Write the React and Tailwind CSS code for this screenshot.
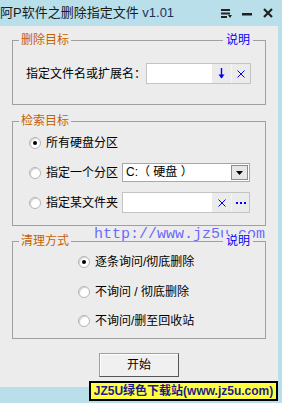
import React from 'react'

const font = { fontFamily: '"Liberation Sans", "Noto Sans CJK SC", sans-serif' }

function Radio({ checked }) {
  return (
    <span className="relative w-[12px] h-[12px] shrink-0 rounded-full border border-[#b4b4b4] bg-white flex items-center justify-center shadow-[inset_1px_1px_1px_#d0d0d0]">
      {checked && <span className="w-[4px] h-[4px] rounded-full bg-black" />}
    </span>
  )
}

function Group({ title, link, className = '', children }) {
  return (
    <div className={`relative ml-[12px] w-[254px] border border-[#a0a0a0] ${className}`}>
      <span className="absolute -top-[8px] left-[6px] px-[2px] bg-[#ececec] text-[12px] leading-[14px] text-[#c86000]">
        {title}
      </span>
      {link && (
        <span className="absolute -top-[8px] left-[210px] px-[3px] bg-[#ececec] text-[12px] leading-[14px] text-[#0000ff] z-20">
          说明
        </span>
      )}
      {children}
    </div>
  )
}

export default function App() {
  return (
    <div className="relative w-[282px] h-[403px] bg-[#b9dfea] flex flex-col overflow-hidden text-[12px] text-black" style={font}>
      {/* title bar */}
      <div className="h-[26px] flex items-center justify-between shrink-0">
        <span className="text-[13px] leading-[16px] text-[#1a1a1a]">
          阿P软件之删除指定文件 <span className="text-[#1e2f5c]">v1.01</span>
        </span>
        <div className="flex items-center h-full">
          <svg width="11" height="9" viewBox="0 0 11 9" className="mr-[10px]">
            <rect x="0" y="0" width="9" height="2" fill="#222" />
            <rect x="0" y="3.5" width="9" height="2" fill="#222" />
            <rect x="0" y="7" width="6" height="2" fill="#222" />
            <path d="M7 6 L11 6 L9 9 Z" fill="#222" />
          </svg>
          <svg width="10" height="3" viewBox="0 0 10 3" className="mr-[11px] mt-[3px]">
            <rect x="0" y="0" width="10" height="2.5" fill="#222" />
          </svg>
          <svg width="10" height="10" viewBox="0 0 10 10" className="mr-[9px]">
            <path d="M1 1 L9 9 M9 1 L1 9" stroke="#222" strokeWidth="2.2" />
          </svg>
        </div>
      </div>

      {/* body */}
      <div className="relative w-[278px] h-[361px] bg-[#ececec] flex flex-col">
        <Group title="删除目标" link className="mt-[14px] pt-[22px] pb-[20px]">
          <div className="flex items-center h-[21px] pl-[13px]">
            <span className="w-[120px]">指定文件名或扩展名：</span>
            <div className="flex w-[105px] h-[21px] border border-[#c4c4c4]">
              <div className="w-[65px] bg-white" />
              <div className="w-[19px] flex items-center justify-center bg-[#ebebeb]">
                <svg width="7" height="11" viewBox="0 0 7 11">
                  <path d="M3.5 0 V10" stroke="#0000ff" strokeWidth="1.4" />
                  <path d="M0.5 6.5 L3.5 10.5 L6.5 6.5" fill="#0000ff" />
                </svg>
              </div>
              <div className="flex-1 flex items-center justify-center bg-[#ebebeb] border-l border-[#f4f4f4]">
                <svg width="8" height="8" viewBox="0 0 8 8">
                  <path d="M0.5 0.5 L7.5 7.5 M7.5 0.5 L0.5 7.5" stroke="#0000ff" strokeWidth="1" />
                </svg>
              </div>
            </div>
          </div>
        </Group>

        <Group title="检索目标" className="mt-[16px] pt-[10px] pb-[12px] flex flex-col gap-[9px]">
          <div className="flex items-center h-[21px] pl-[16px]">
            <Radio checked />
            <span className="ml-[5px]">所有硬盘分区</span>
          </div>
          <div className="flex items-center h-[21px] pl-[16px]">
            <Radio />
            <span className="ml-[5px] w-[76px]">指定一个分区</span>
            <div className="flex items-center w-[128px] h-[19px] border border-[#a8a8a8] bg-white">
              <span className="flex-1 pl-[3px] leading-[17px]">C:（ 硬盘 ）</span>
              <div className="w-[17px] h-[15px] mr-[1px] bg-[#e6e6e6] border border-[#8c8c8c] flex items-center justify-center">
                <svg width="7" height="4" viewBox="0 0 7 4">
                  <path d="M0 0 H7 L3.5 4 Z" fill="#000" />
                </svg>
              </div>
            </div>
          </div>
          <div className="flex items-center h-[21px] pl-[16px]">
            <Radio />
            <span className="ml-[5px] w-[76px]">指定某文件夹</span>
            <div className="flex w-[128px] h-[21px] border border-[#c4c4c4]">
              <div className="w-[89px] bg-white" />
              <div className="w-[19px] flex items-center justify-center bg-[#ebebeb]">
                <svg width="8" height="8" viewBox="0 0 8 8">
                  <path d="M0.5 0.5 L7.5 7.5 M7.5 0.5 L0.5 7.5" stroke="#0000ff" strokeWidth="1" />
                </svg>
              </div>
              <div className="flex-1 flex items-center justify-center bg-[#ebebeb] border-l border-[#f4f4f4]">
                <svg width="10" height="2" viewBox="0 0 10 2">
                  <rect x="0" y="0" width="2" height="2" fill="#0000ff" />
                  <rect x="4" y="0" width="2" height="2" fill="#0000ff" />
                  <rect x="8" y="0" width="2" height="2" fill="#0000ff" />
                </svg>
              </div>
            </div>
          </div>
        </Group>

        <Group title="清理方式" link className="mt-[15px] pt-[10px] pb-[7px] flex flex-col">
          <div className="flex items-center h-[20px] pl-[65px]">
            <Radio checked />
            <span className="ml-[5px]">逐条询问/彻底删除</span>
          </div>
          <div className="flex items-center h-[20px] pl-[65px] mt-[10px]">
            <Radio />
            <span className="ml-[5px]">不询问 / 彻底删除</span>
          </div>
          <div className="flex items-center h-[20px] pl-[65px] mt-[9px]">
            <Radio />
            <span className="ml-[5px]">不询问/删至回收站</span>
          </div>
        </Group>

        <button className="mt-[14px] ml-[99px] w-[80px] h-[24px] bg-[#f0f0f0] border border-[#a0a0a0] border-r-[#555] border-b-[#555] text-[12px] shadow-[inset_1px_1px_0_#fff]">
          开始
        </button>

        {/* watermark */}
        <span
          className="absolute left-[94px] top-[200px] text-[15px] leading-[17px] text-[#4646ff]/80 z-10 pointer-events-none"
          style={{ fontFamily: '"Liberation Mono", monospace' }}
        >
          http://www.jz5u.com
        </span>
      </div>

      {/* banner */}
      <div className="absolute left-[89px] top-[381px] w-[189px] h-[20px] bg-[#ffff40] border-2 border-black flex items-center justify-center text-[12px] font-bold text-[#1c1c8c] whitespace-nowrap">
        JZ5U绿色下载站(www.jz5u.com)
      </div>
    </div>
  )
}
